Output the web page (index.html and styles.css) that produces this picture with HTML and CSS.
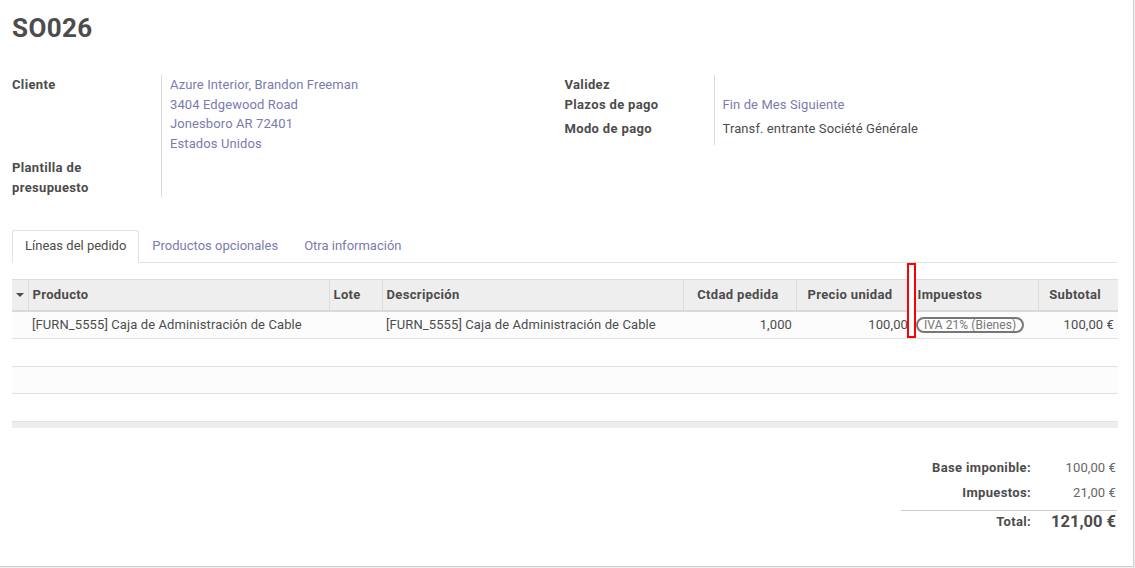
FILE: index.html
```html
<!DOCTYPE html>
<html lang="es">
<head>
<meta charset="utf-8">
<title>SO026</title>
<link rel="stylesheet" href="styles.css">
</head>
<body>
<div class="sheet">
  <h1 class="title">SO026</h1>

  <div class="groups">
    <div class="group">
      <div class="lbl pb5">Cliente</div>
      <div class="val pb5">
        <a class="link">Azure Interior, Brandon Freeman</a>
        <a class="link">3404 Edgewood Road</a>
        <a class="link">Jonesboro AR 72401</a>
        <a class="link">Estados Unidos</a>
      </div>
      <div class="lbl">Plantilla de<br>presupuesto</div>
      <div class="val"></div>
    </div>
    <div class="group">
      <div class="lbl">Validez</div>
      <div class="val empty"></div>
      <div class="lbl pb5">Plazos de pago</div>
      <div class="val pb5"><a class="link">Fin de Mes Siguiente</a></div>
      <div class="lbl pb6">Modo de pago</div>
      <div class="val pb6">Transf. entrante Société Générale</div>
    </div>
  </div>

  <ul class="tabs">
    <li class="tab active">Líneas del pedido</li>
    <li class="tab">Productos opcionales</li>
    <li class="tab">Otra información</li>
  </ul>

  <table class="lines">
    <colgroup>
      <col class="c-h"><col class="c-prod"><col class="c-lote"><col class="c-desc"><col class="c-qty"><col class="c-price"><col class="c-tax"><col class="c-sub">
    </colgroup>
    <thead>
      <tr>
        <th class="handle"><span class="caret"></span></th>
        <th>Producto</th>
        <th>Lote</th>
        <th>Descripción</th>
        <th class="num">Ctdad pedida</th>
        <th class="num">Precio unidad</th>
        <th class="tax">Impuestos</th>
        <th class="num">Subtotal</th>
      </tr>
    </thead>
    <tbody>
      <tr>
        <td></td>
        <td>[FURN_5555] Caja de Administración de Cable</td>
        <td></td>
        <td class="desc">[FURN_5555] Caja de Administración de Cable</td>
        <td class="num">1,000</td>
        <td class="num price">100,00</td>
        <td class="tax"><span class="badge">IVA 21% (Bienes)</span></td>
        <td class="num">100,00 €</td>
      </tr>
      <tr class="blank"><td colspan="8"></td></tr>
      <tr class="blank"><td colspan="8"></td></tr>
      <tr class="blank"><td colspan="8"></td></tr>
    </tbody>
    <tfoot>
      <tr><td colspan="8"></td></tr>
    </tfoot>
  </table>

  <div class="totals">
    <div class="trow"><span class="tl">Base imponible:</span><span class="tv">100,00 €</span></div>
    <div class="trow"><span class="tl">Impuestos:</span><span class="tv">21,00 €</span></div>
    <div class="trow total"><span class="tl">Total:</span><span class="tv">121,00 €</span></div>
  </div>

  <div class="resize-hint"></div>
</div>
</body>
</html>
```

FILE: styles.css
```css
html, body {
  margin: 0;
  padding: 0;
}
body {
  background: #f0f0f0;
  font-family: Roboto, "Liberation Sans", Arial, sans-serif;
  font-size: 13px;
  line-height: 19.5px;
  letter-spacing: 0.1px;
  color: #4c4c4c;
}
.sheet {
  position: relative;
  width: 1134px;
  height: 567px;
  box-sizing: border-box;
  background: #fff;
  border-right: 1px solid #cfcfcf;
  border-bottom: 1px solid #cfcfcf;
  padding: 13px 16px 0 12px;
}
.title {
  margin: 0;
  font-size: 26px;
  line-height: 31px;
  font-weight: bold;
  letter-spacing: 0.4px;
  color: #4c4c4c;
}
.groups {
  display: flex;
  margin-top: 31px;
}
.group {
  width: 553px;
  display: grid;
  grid-template-columns: 149px 1fr;
  align-content: start;
}
.lbl {
  font-weight: bold;
  letter-spacing: 0.35px;
}
.val {
  border-left: 1px solid #dcdcdc;
  padding-left: 8px;
}
.val.empty {
  height: 19.5px;
}
.pb5 { padding-bottom: 5px; }
.pb6 { padding-bottom: 6px; }
.link {
  display: block;
  color: #7c7bad;
  text-decoration: none;
}
.tabs {
  list-style: none;
  margin: 33px 0 0 0;
  padding: 0;
  display: flex;
  border-bottom: 1px solid #dee2e6;
}
.tab {
  padding: 5px 12px 7px;
  line-height: 19px;
  letter-spacing: 0;
  border: 1px solid transparent;
  border-radius: 3px 3px 0 0;
  margin-bottom: -1px;
  color: #7c7bad;
}
.tab.active {
  color: #4c4c4c;
  border-color: #dee2e6 #dee2e6 #fff;
  background: #fff;
}
.lines {
  margin-top: 16px;
  width: 1106px;
  table-layout: fixed;
  border-collapse: collapse;
}
.c-h { width: 16px; }
.c-prod { width: 301px; }
.c-lote { width: 53px; }
.c-desc { width: 301px; }
.c-qty { width: 113px; }
.c-price { width: 114px; }
.c-tax { width: 128px; }
.c-sub { width: 80px; }
.lines th {
  background: #eeeeee;
  font-weight: bold;
  letter-spacing: 0.35px;
  text-align: left;
  height: 19px;
  padding: 5px 4px 5px 4px;
  border-top: 1px solid #dddddd;
  border-bottom: 2px solid #d9d9d9;
  border-left: 1px solid #dcdcdc;
  white-space: nowrap;
  overflow: hidden;
}
.lines th.handle {
  border-left: none;
  padding: 5px 0 5px 4px;
}
.caret {
  display: inline-block;
  width: 0;
  height: 0;
  border-left: 4px solid transparent;
  border-right: 4px solid transparent;
  border-top: 4px solid #4c4c4c;
  vertical-align: middle;
  margin-top: -2px;
}
.lines th.num {
  text-align: right;
  padding-right: 17px;
}
.lines th.tax {
  padding-left: 7px;
}
.lines td {
  padding: 4px 4px;
  height: 18.5px;
  line-height: 18.5px;
  white-space: nowrap;
  overflow: hidden;
  border-bottom: 1px solid #dee2e6;
}
.lines td.num {
  text-align: right;
}
.lines td.price {
  padding-right: 2px;
}
.lines td.tax {
  padding-left: 6px;
}
.lines td.desc {
  padding-left: 4px;
}
.lines tbody tr:nth-child(odd) td {
  background: #fcfcfc;
}
.lines tbody tr.blank td {
  height: 18.5px;
}
.lines tfoot td {
  height: 6px;
  padding: 0;
  background: #eeeeee;
  border-top: 1px solid #dddddd;
  border-bottom: none;
}
.badge {
  display: inline-block;
  border: 2px solid #777;
  border-radius: 10px;
  padding: 0 6px;
  font-size: 12px;
  line-height: 12px;
  color: #777;
  vertical-align: middle;
}
.totals {
  width: 216px;
  margin-left: auto;
  margin-top: 27px;
}
.trow {
  display: flex;
  line-height: 25px;
}
.tl {
  flex: 1;
  text-align: right;
  font-weight: bold;
  letter-spacing: 0.35px;
}
.tv {
  width: 86px;
  text-align: right;
  color: #666;
  padding-right: 1px;
  box-sizing: border-box;
}
.trow.total {
  border-top: 1px solid #cccccc;
  margin-top: 5px;
  line-height: 22px;
}
.trow.total .tv {
  font-size: 16.5px;
  font-weight: bold;
  letter-spacing: 0;
  color: #4c4c4c;
}
.resize-hint {
  position: absolute;
  left: 907px;
  top: 263px;
  width: 9px;
  height: 75px;
  box-sizing: border-box;
  border: 2px solid #ff0000;
  background: #fff;
}
```
